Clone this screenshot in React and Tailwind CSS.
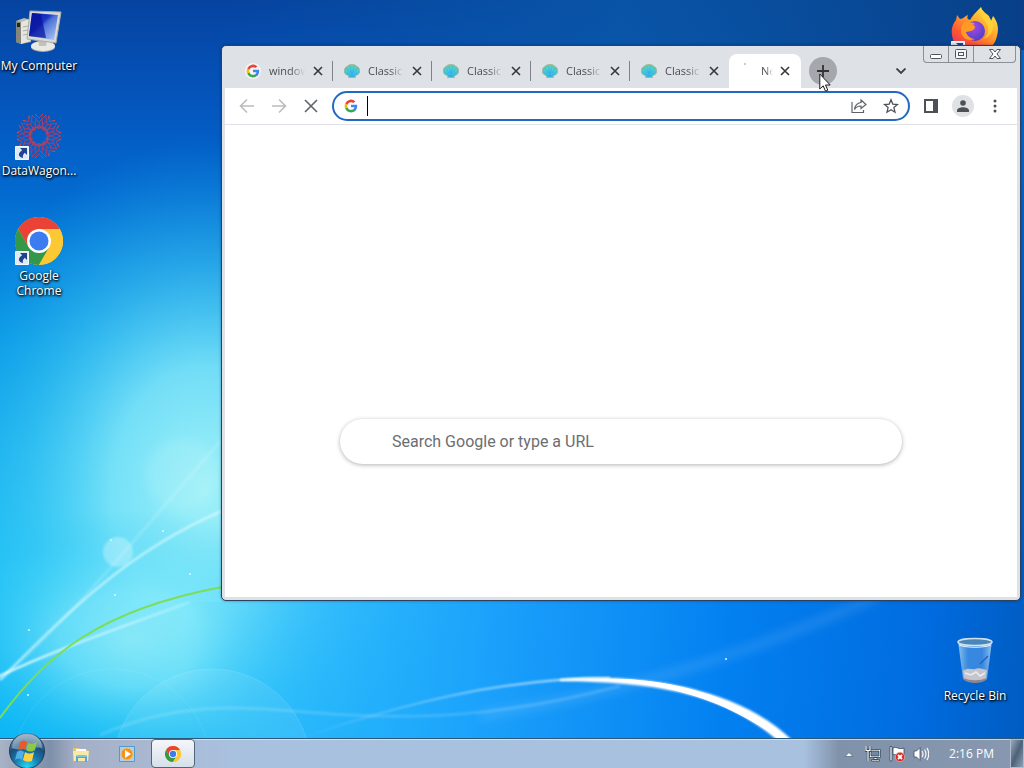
import React from "react";

const tabs = [
  { title: "windows", icon: "google" },
  { title: "Classic", icon: "shell" },
  { title: "Classic", icon: "shell" },
  { title: "Classic", icon: "shell" },
  { title: "Classic", icon: "shell" },
];

function GoogleIcon({ className }) {
  return (
    <svg viewBox="0 0 24 24" className={className} aria-hidden="true">
      <path fill="#4285f4" d="M22.6 12.2c0-.8-.1-1.5-.2-2.2H12v4.3h6a5.1 5.1 0 0 1-2.2 3.3v2.8h3.6c2-1.900 3.2-4.700 3.2-8.200z" />
      <path fill="#34a853" d="M12 23c3 0 5.5-1 7.3-2.700l-3.600-2.800c-1 .7-2.200 1.100-3.700 1.100-2.900 0-5.300-1.900-6.200-4.500H2.200v2.800A11 11 0 0 0 12 23z" />
      <path fill="#fbbc05" d="M5.8 14.1a6.600 6.600 0 0 1 0-4.200V7.100H2.200a11 11 0 0 0 0 9.900z" />
      <path fill="#ea4335" d="M12 5.400c1.600 0 3.100.6 4.200 1.600l3.200-3.100A11 11 0 0 0 2.200 7.100l3.600 2.800C6.700 7.300 9.100 5.400 12 5.400z" />
    </svg>
  );
}

function ShellIcon({ className }) {
  return (
    <svg viewBox="0 0 16 16" className={className} aria-hidden="true">
      <defs>
        <radialGradient id="shell" cx="50%" cy="70%" r="65%">
          <stop offset="0" stopColor="#1f9cec" />
          <stop offset="0.5" stopColor="#38c3dd" />
          <stop offset="1" stopColor="#66c9a0" />
        </radialGradient>
      </defs>
      <path
        fill="url(#shell)"
        stroke="#a5ae93"
        strokeWidth="0.8"
        d="M4.500 14.500 5 13 2 11.500C.6 10.500 0 9 .4 7.500.4 5.500 1.500 4.300 3 3.600 4 2.200 5.500 1.500 7 1.700c.7-.4 1.400-.4 2 0 1.600-.2 3 .5 4 1.900 1.500.7 2.600 1.900 2.600 3.900.4 1.500-.2 3-1.600 4L11 13l.5 1.500z"
      />
      <path
        stroke="#7fe8ea"
        strokeWidth="0.5"
        fill="none"
        opacity="0.7"
        d="M8 12V2.500M7 12 4.500 3.500M9 12l2.500-8.500M6.500 12 2 6.500M9.500 12 14 6.500"
      />
    </svg>
  );
}

function ChromeIcon({ className }) {
  return (
    <svg viewBox="0 0 48 48" className={className} aria-hidden="true">
      <circle cx="24" cy="24" r="24" fill="#fcc934" />
      <path fill="#ea4335" d="M3.200 12A24 24 0 0 1 44.800 12H24L13.600 30z" />
      <path fill="#34984b" d="M3.200 12A24 24 0 0 0 24 48L34.400 30 24 36 13.600 30z" />
      <path fill="#fcc934" d="M24 48A24 24 0 0 0 44.800 12H24l10.400 18z" />
      <circle cx="24" cy="24" r="12" fill="#fff" />
      <circle cx="24" cy="24" r="9.500" fill="#3b7df0" />
    </svg>
  );
}

function ShortcutArrow({ className }) {
  return (
    <svg viewBox="0 0 14 14" className={className} aria-hidden="true">
      <path fill="#dfeaf6" stroke="#f4f8fc" d="M.5.5h13v13H.5z" />
      <path fill="#1e4390" d="M5 2h7v7L9.800 6.800C8 8.500 7.500 9.800 8 12 3.500 11 2 7.500 7.200 4.200z" />
    </svg>
  );
}

function ComputerIcon() {
  return (
    <svg viewBox="0 0 48 48" className="size-12" aria-hidden="true">
      <defs>
        <linearGradient id="screen" x1="0" y1="0" x2="1" y2="1">
          <stop offset="0" stopColor="#0a16a8" />
          <stop offset="0.4" stopColor="#1c35c4" />
          <stop offset="0.5" stopColor="#4d73d9" />
          <stop offset="1" stopColor="#b9cdf5" />
        </linearGradient>
      </defs>
      <path fill="#b9bbb5" d="M1 14 9 11l7 2v22L6 37l-5-2z" />
      <path fill="#e6e6df" d="m6 15 9-3v22l-9 3z" />
      <path fill="#85877f" d="m1 14 5 1v22l-5-2z" />
      <path fill="#202821" d="M2 16h3v4H2z" />
      <path stroke="#aaaea2" d="m8 20 5-1M8 24l5-1M8 28l5-1" />
      <ellipse cx="28" cy="40" rx="12" ry="5" fill="#aeb0ab" />
      <ellipse cx="28" cy="39" rx="12" ry="5" fill="#e9e9e4" />
      <path fill="#bfc1bb" d="m23 31 9 2-1 6h-7z" />
      <path fill="#d9dad5" stroke="#a9aca8" d="m15 4 31 1-5 31-29-4z" />
      <path fill="url(#screen)" d="m17 6 26 2-4 25-25-4z" />
      <path fill="#07139d" d="m17 6 9 1 5 24-17-2z" opacity="0.7" />
    </svg>
  );
}

function DataWagonIcon() {
  const angles = [0, 36, 72, 108, 144, 180, 216, 252, 288, 324];
  return (
    <svg viewBox="0 0 48 48" className="size-12" fill="none" stroke="#a23f6c" aria-hidden="true">
      {angles.map((a) => (
        <g key={a} transform={`rotate(${a} 24 24)`}>
          <path d="m17 3 7 7 7-7M20 2l4 4 4-4M24 10v4M16 8l8 9 8-9M20 17l4-4 4 4" />
          <path stroke="#cc4650" d="m20 2 2 2M28 2l-2 2M22 15h4" />
        </g>
      ))}
    </svg>
  );
}

function FirefoxIcon() {
  return (
    <svg viewBox="0 0 48 48" className="size-12" aria-hidden="true">
      <defs>
        <linearGradient id="fox" x1="0.9" y1="0" x2="0.2" y2="1">
          <stop offset="0" stopColor="#fff44f" />
          <stop offset="0.4" stopColor="#ffa52b" />
          <stop offset="0.7" stopColor="#ff5b30" />
          <stop offset="1" stopColor="#e52468" />
        </linearGradient>
        <radialGradient id="globe" cx="40%" cy="30%" r="70%">
          <stop offset="0" stopColor="#a44be8" />
          <stop offset="1" stopColor="#5540c8" />
        </radialGradient>
      </defs>
      <path fill="url(#fox)" d="M30 0c1 4 5 6 8 9l2 5 2-5c5 6 6 13 4 20-2 10-11 18-22 18S2 39 1 28c-1-7 1-11 4-15l1-5 3 4c3 0 5-3 8-4-1 3-1 4 2 5 3-5 6-8 11-13z" />
      <circle cx="24" cy="24" r="10" fill="url(#globe)" />
      <path fill="#ff9b24" d="M13 16c4-2 8-1 11 1l-3 1c5 0 3 5-1 6l-5 1c1 4 5 7 9 7-7 3-14-1-14-9 0-3 1-5 3-7z" />
      <path fill="#ffd43a" d="M30 0c-2 6 1 10 4 14 5 6 4 15-2 18 9-2 13-13 8-19-3-5-9-7-10-13z" opacity="0.8" />
    </svg>
  );
}

function RecycleIcon() {
  return (
    <svg viewBox="0 0 48 48" className="size-12" aria-hidden="true">
      <defs>
        <linearGradient id="bin">
          <stop offset="0" stopColor="#b4d8f5" stopOpacity="0.8" />
          <stop offset="0.3" stopColor="#5ba0e8" stopOpacity="0.6" />
          <stop offset="0.7" stopColor="#6aaaf0" stopOpacity="0.5" />
          <stop offset="1" stopColor="#b8dcf8" stopOpacity="0.8" />
        </linearGradient>
      </defs>
      <path fill="url(#bin)" d="m7 4 5 38c4 4 20 4 24 0l5-38z" />
      <path fill="#c3c4cc" d="M12 34c5-4 9-1 12-2 4-2 8 0 12 1l-1 9c-5 4-17 4-22 0z" />
      <path fill="#8e8790" d="M13 41c5 3 17 3 22 0v2c-5 4-17 4-22 0z" />
      <path stroke="#ececf0" strokeWidth="1.500" fill="none" d="m14 36 6 2 5-3 4 4 5-3" />
      <path stroke="#2561b5" strokeWidth="1.500" fill="none" d="m29 27 8-8" />
      <ellipse cx="24" cy="5" rx="17" ry="3.500" fill="#4b86b9" stroke="#d0e2ef" strokeWidth="1.500" />
      <path stroke="#e9f5ff" fill="none" d="M8 8c7 3 25 3 32 0" />
    </svg>
  );
}

function Wallpaper() {
  return (
    <svg
      viewBox="0 0 1024 768"
      preserveAspectRatio="none"
      className="absolute inset-0 size-full"
      fill="none"
      aria-hidden="true"
    >
      <defs>
        <linearGradient id="sky" x1="0" y1="0" x2="0" y2="1">
          <stop offset="0" stopColor="#0643a0" />
          <stop offset="0.13" stopColor="#0455bc" />
          <stop offset="0.25" stopColor="#036ad0" />
          <stop offset="0.35" stopColor="#0784dd" />
          <stop offset="0.45" stopColor="#0a9ae6" />
          <stop offset="0.6" stopColor="#18b0ee" />
          <stop offset="0.75" stopColor="#20c2f5" />
          <stop offset="1" stopColor="#08b4f6" />
        </linearGradient>
        <linearGradient id="top" x1="0" y1="0" x2="1" y2="0">
          <stop offset="0" stopColor="#0a58a8" stopOpacity="0" />
          <stop offset="0.5" stopColor="#0a58a8" stopOpacity="0.8" />
          <stop offset="1" stopColor="#083f88" />
        </linearGradient>
        <linearGradient id="right" gradientUnits="userSpaceOnUse" x1="200" y1="500" x2="1100" y2="590">
          <stop offset="0" stopColor="#35c0fd" stopOpacity="0" />
          <stop offset="0.15" stopColor="#2db4fd" stopOpacity="0.7" />
          <stop offset="0.35" stopColor="#1a9ffb" />
          <stop offset="0.6" stopColor="#0380f0" />
          <stop offset="0.82" stopColor="#006bde" />
          <stop offset="1" stopColor="#0053b0" />
        </linearGradient>
        <radialGradient id="glow">
          <stop offset="0" stopColor="#a0f1f8" />
          <stop offset="0.35" stopColor="#8becfa" stopOpacity="0.8" />
          <stop offset="0.65" stopColor="#55d8f8" stopOpacity="0.4" />
          <stop offset="1" stopColor="#1eb8f2" stopOpacity="0" />
        </radialGradient>
        <linearGradient id="arc" gradientUnits="userSpaceOnUse" x1="300" y1="0" x2="680" y2="0">
          <stop offset="0" stopColor="#fff" stopOpacity="0" />
          <stop offset="1" stopColor="#fff" />
        </linearGradient>
        <linearGradient id="tail" gradientUnits="userSpaceOnUse" x1="0" y1="0" x2="222" y2="0">
          <stop offset="0" stopColor="#f0fdff" />
          <stop offset="0.6" stopColor="#e0fbff" stopOpacity="0.7" />
          <stop offset="1" stopColor="#e0fbff" stopOpacity="0.1" />
        </linearGradient>
        <filter id="soft">
          <feGaussianBlur stdDeviation="0.8" />
        </filter>
        <filter id="haze">
          <feGaussianBlur stdDeviation="5" />
        </filter>
      </defs>
      <path fill="url(#sky)" d="M0 0h1024v768H0z" />
      <path fill="url(#top)" d="M222 0h802v60H222z" />
      <ellipse cx="205" cy="490" rx="270" ry="350" fill="url(#glow)" />
      <ellipse cx="130" cy="640" rx="200" ry="130" fill="url(#glow)" opacity="0.7" />
      <path fill="url(#right)" d="M222 50h802v718H222z" />
      <path fill="url(#right)" d="M150 602h72v166h-72z" />
      <circle cx="182" cy="475" r="36" fill="#c4f5fa" opacity="0.2" filter="url(#haze)" />
      <circle cx="118" cy="552" r="15" fill="#d6f8fd" opacity="0.4" filter="url(#soft)" />
      <circle cx="212" cy="768" r="99" fill="#fff" fillOpacity="0.08" stroke="#fff" strokeOpacity="0.12" />
      <circle cx="112" cy="768" r="99" stroke="#fff" strokeOpacity="0.08" />
      <path stroke="#fff" strokeWidth="3" opacity="0.15" filter="url(#soft)" d="M0 680C80 610 150 520 222 440" />
      <path stroke="#e8fcff" strokeWidth="2" opacity="0.7" filter="url(#soft)" d="M0 680C70 610 130 550 222 511" />
      <path stroke="url(#tail)" strokeWidth="2" filter="url(#soft)" d="M-5 678C55 650 100 635 190 602" />
      <path stroke="#7cdd56" strokeWidth="2" d="M0 718C45 655 100 610 222 587" />
      <path stroke="#fff" strokeWidth="3" opacity="0.15" filter="url(#soft)" d="M100 735C190 695 260 710 350 715S520 712 620 686" />
      <path stroke="#fff" strokeWidth="10" opacity="0.1" filter="url(#haze)" d="M480 715C650 690 780 640 880 595" />
      <path stroke="url(#arc)" strokeWidth="2" filter="url(#soft)" d="M300 738C400 705 500 678 610 678" />
      <path fill="#fff" d="M560 679C650 673 740 690 792 740H777C725 695 660 682 560 681z" filter="url(#soft)" />
      <path fill="#fff" d="M600 679C670 677 735 695 790 740H780C725 699 665 683 600 680z" />
      <g fill="#d8fbff">
        <circle cx="111" cy="540" r="1" />
        <circle cx="163" cy="531" r="1" />
        <circle cx="190" cy="574" r="1" />
        <circle cx="115" cy="595" r="1" />
        <circle cx="29" cy="630" r="1" />
        <circle cx="28" cy="695" r="1" />
        <circle cx="726" cy="659" r="1" />
      </g>
    </svg>
  );
}

function DesktopIcon({ label, shortcut, className, children }) {
  return (
    <button
      className={`absolute flex w-20 flex-col items-center gap-[3px] text-xs/[15px] text-white [text-shadow:1px_1px_2px_#000,0_1px_3px_#000] ${className}`}
    >
      <span className="relative size-12">
        {children}
        {shortcut && <ShortcutArrow className="absolute bottom-0 left-0 size-[14px]" />}
      </span>
      <span>{label}</span>
    </button>
  );
}

function CloseTab({ title }) {
  return (
    <button aria-label={`Close ${title}`} className="grid size-4 shrink-0 place-items-center">
      <svg viewBox="0 0 10 10" className="size-[10px]" stroke="#34373b" strokeWidth="1.600">
        <path d="m1 1 8 8M9 1 1 9" />
      </svg>
    </button>
  );
}

function Tab({ title, icon, last }) {
  return (
    <div className="flex h-[34px] w-[99px] items-center pl-[11px]">
      {icon === "google" ? (
        <span className="grid size-4 shrink-0 place-items-center rounded-full bg-[#f3f4f6]">
          <GoogleIcon className="size-[14px]" />
        </span>
      ) : (
        <ShellIcon className="size-4 shrink-0" />
      )}
      <span className="ml-2 w-9 overflow-hidden whitespace-nowrap text-[#4a4d52] [mask-image:linear-gradient(to_right,#000_60%,transparent)]">
        {title}
      </span>
      <span className="ml-[5px] flex">
        <CloseTab title={title} />
      </span>
      <span className={last ? "hidden" : "ml-auto h-5 w-px bg-[#7f8389]"} />
    </div>
  );
}

function TabStrip() {
  return (
    <div className="flex h-[42px] pl-[9px] text-[11px]">
      <div className="flex items-end">
        {tabs.map((tab, i) => (
          <Tab key={i} {...tab} last={i === tabs.length - 1} />
        ))}
        <div className="flex h-[34px] w-[72px] items-center rounded-t-lg bg-white pl-2">
          <span className="flex size-4 justify-center">
            <span className="size-[2px] rounded-full bg-[#b5b8be]" />
          </span>
          <span className="ml-2 mr-1 w-3 overflow-hidden whitespace-nowrap text-[#4a4d52] [mask-image:linear-gradient(to_right,#000_40%,transparent)]">
            New
          </span>
          <CloseTab title="New Tab" />
        </div>
      </div>
      <button aria-label="New tab" className="mt-[11px] ml-2 grid size-7 place-items-center rounded-full bg-[#a4a7ac]">
        <svg viewBox="0 0 12 12" className="size-3" stroke="#303236" strokeWidth="1.800">
          <path d="M6 0v12M0 6h12" />
        </svg>
      </button>
      <button aria-label="Search tabs" className="mt-[11px] mr-2 ml-auto grid size-7 place-items-center">
        <svg viewBox="0 0 10 6" className="h-[6px] w-[10px]" fill="none" stroke="#3c4043" strokeWidth="1.800">
          <path d="m.5.5 4.500 4.500L9.500.5" />
        </svg>
      </button>
      <div className="mr-px flex h-[17px] rounded-b border border-t-0 border-[#8b8f96]">
        <button aria-label="Minimize" className="grid w-[25px] place-items-center border-r border-[#8b8f96]">
          <svg viewBox="0 0 14 14" className="size-[14px]" fill="#fff" stroke="#50555d">
            <rect x="1.500" y="7.500" width="11" height="4" rx="1" />
          </svg>
        </button>
        <button aria-label="Restore" className="grid w-[25px] place-items-center border-r border-[#8b8f96]">
          <svg viewBox="0 0 14 14" className="size-[14px]" fill="#f5f6f8" stroke="#50555d">
            <rect x="1.500" y="2.500" width="11" height="9" rx="1" />
            <rect x="4.500" y="5.500" width="5" height="3" />
          </svg>
        </button>
        <button aria-label="Close" className="grid w-[41px] place-items-center">
          <svg viewBox="0 0 14 14" className="size-[14px]" fill="#fff" stroke="#50555d">
            <path d="M1.500 2.500H5L7 5l2-2.500h3.500L9 7l3.500 4.500H9L7 9l-2 2.500H1.500L5 7z" />
          </svg>
        </button>
      </div>
    </div>
  );
}

function ToolButton({ label, children }) {
  return (
    <button aria-label={label} className="grid h-8 w-8 shrink-0 place-items-center">
      {children}
    </button>
  );
}

function Toolbar() {
  return (
    <div className="flex h-[37px] items-center border-b border-[#e3e1e8] bg-white pr-[6px] pl-[6px]">
      <ToolButton label="Back">
        <svg viewBox="0 0 16 16" className="size-4" fill="none" stroke="#babcbe" strokeWidth="1.600">
          <path d="M15 8H2M8 1.500 1.500 8 8 14.500" />
        </svg>
      </ToolButton>
      <ToolButton label="Forward">
        <svg viewBox="0 0 16 16" className="size-4" fill="none" stroke="#babcbe" strokeWidth="1.600">
          <path d="M1 8h13M8 1.500 14.500 8 8 14.500" />
        </svg>
      </ToolButton>
      <ToolButton label="Stop">
        <svg viewBox="0 0 16 16" className="size-4" stroke="#5f6368" strokeWidth="1.600">
          <path d="m2 2 12 12M14 2 2 14" />
        </svg>
      </ToolButton>
      <div className="mr-[5px] ml-[5px] flex h-[30px] min-w-0 flex-1 items-center rounded-full border-2 border-[#2369c3] bg-white pr-px pl-[10px]">
        <GoogleIcon className="size-[14px] shrink-0" />
        <span className="ml-[9px] h-5 w-px bg-black" />
        <input aria-label="Address bar" className="h-6 min-w-0 flex-1 text-sm outline-none" />
        <ToolButton label="Share">
          <svg viewBox="0 0 16 16" className="size-4" fill="none" stroke="#5f6368" strokeWidth="1.200">
            <path d="M1 4v10.500h11.500V12M10 2l5 4.500-5 4V8C7 8 5 9 3.500 11.500 4 7.500 6 5 10 4.500z" />
          </svg>
        </ToolButton>
        <ToolButton label="Bookmark this tab">
          <svg viewBox="0 0 16 16" className="size-4" fill="none" stroke="#4d5156" strokeWidth="1.300">
            <path d="m8 1.800 1.800 4.300 4.700.4-3.600 3.100 1.100 4.600L8 11.800l-4 2.400 1.100-4.600-3.600-3.100 4.700-.4z" />
          </svg>
        </ToolButton>
      </div>
      <ToolButton label="Side panel">
        <svg viewBox="0 0 14 14" className="size-[14px]">
          <path fill="#4d5156" d="M0 0h14v14H0zM2 2v10h7V2z" fillRule="evenodd" />
        </svg>
      </ToolButton>
      <ToolButton label="Profile">
        <span className="grid size-[22px] place-items-center rounded-full bg-[#dfe1e5]">
          <svg viewBox="0 0 12 12" className="size-3" fill="#4d5156">
            <circle cx="6" cy="3" r="2.800" />
            <path d="M0 12v-1.500C0 8.500 3.500 7.300 6 7.300s6 1.200 6 3.200V12z" />
          </svg>
        </span>
      </ToolButton>
      <ToolButton label="Menu">
        <svg viewBox="0 0 4 14" className="h-[14px] w-1" fill="#4d5156">
          <circle cx="2" cy="2" r="1.500" />
          <circle cx="2" cy="7" r="1.500" />
          <circle cx="2" cy="12" r="1.500" />
        </svg>
      </ToolButton>
    </div>
  );
}

function BrowserWindow() {
  return (
    <main className="absolute top-[45px] right-[3px] bottom-[137px] left-[221px] flex flex-col rounded-[5px] border border-[#29425f] bg-[#dee1e6] px-[3px] pb-[3px] text-xs shadow-[0_0_3px_rgba(0,20,60,0.4)]">
      <TabStrip />
      <Toolbar />
      <div className="flex flex-1 items-start justify-center bg-white px-6 pt-[294px]">
        <input
          aria-label="Search"
          placeholder="Search Google or type a URL"
          className="h-[45px] w-full max-w-[562px] rounded-full bg-white px-[52px] font-[Roboto,sans-serif] text-base text-[#5f6368] shadow-[0_1px_4px_rgba(32,33,36,0.35)] outline-none placeholder:text-[#6b6e72]"
        />
      </div>
    </main>
  );
}

function StartOrb() {
  return (
    <svg viewBox="0 0 38 38" className="relative -top-1 size-[38px] shrink-0" aria-hidden="true">
      <defs>
        <radialGradient id="orb" cx="50%" cy="95%" r="90%">
          <stop offset="0" stopColor="#28d5f3" />
          <stop offset="0.4" stopColor="#157caf" />
          <stop offset="0.7" stopColor="#1b4e7c" />
          <stop offset="1" stopColor="#7999b2" />
        </radialGradient>
      </defs>
      <circle cx="19" cy="20" r="17.500" fill="url(#orb)" stroke="#213c5a" />
      <path fill="#c6dae7" opacity="0.45" d="M4 17a15 15 0 0 1 30 0c-9-2-21 4-30 0z" />
      <path fill="#e9592a" d="M12 11c3-2 5-2 7 0l-2 8c-2-2-4-2-7 0z" />
      <path fill="#8fc943" d="M20 12c3 1 6 1 9-1l-2 8c-3 2-6 2-9 0z" />
      <path fill="#51aee9" d="M9 21c3-2 5-2 7 0l-2 8c-2-2-4-2-7 0z" />
      <path fill="#fcd240" d="M17 21c3 2 6 2 9 0l-2 9c-3 1-6 1-9-1z" />
    </svg>
  );
}

function Taskbar() {
  return (
    <footer className="relative flex h-[30px] items-stretch border-t border-[#2b5878] bg-[linear-gradient(to_right,#a9b3c6_0,#7e8fa9_50px,#a4afc6_75px,#a9b8d0_150px,#a8c1df_230px,#a8c1df_calc(100%-220px),#8092aa_calc(100%-185px),#8798b0_100%)] shadow-[inset_0_1px_0_rgba(225,240,250,0.7)]">
      <button aria-label="Start" className="flex w-[58px] items-center pl-2">
        <StartOrb />
      </button>
      <button aria-label="Windows Explorer" className="grid w-[46px] place-items-center">
        <svg viewBox="0 0 18 18" className="size-[18px]">
          <path fill="#e4c668" d="M1 3h6l1 2h8v11H1z" />
          <path fill="#fff" d="M4 4h10v3H4z" />
          <path fill="#f7eaa5" d="M1 6h16l-1 10H2z" />
          <path fill="#57a6d7" d="M4 17v-5q0-2 2-2h7q2 0 2 2v5h-2v-4H6v4z" />
          <path stroke="#a7dcf4" d="M5 11h9" />
        </svg>
      </button>
      <button aria-label="Windows Media Player" className="grid w-[46px] place-items-center">
        <svg viewBox="0 0 16 16" className="size-4">
          <path fill="#acd2ee" stroke="#4c9cd2" d="M.5.5h15v15H.5z" />
          <circle cx="8" cy="8" r="6" fill="#f2921d" stroke="#fac064" />
          <path fill="#fff" d="m6 4 6 4-6 4z" />
        </svg>
      </button>
      <button
        aria-label="Google Chrome"
        className="ml-px grid w-11 place-items-center rounded-sm border border-[#50647e] bg-gradient-to-b from-[#f4f6f9] to-[#d7dfea]"
      >
        <ChromeIcon className="size-4" />
      </button>
      <div className="ml-auto flex items-center">
        <button aria-label="Show hidden icons" className="grid h-full w-6 place-items-center">
          <svg viewBox="0 0 10 6" className="h-[6px] w-[10px]" fill="#fff" stroke="#5d6f86" strokeWidth="0.8">
            <path d="m1 5.500 4-4 4 4z" />
          </svg>
        </button>
        <button aria-label="Network" className="grid w-6 place-items-center">
          <svg viewBox="0 0 16 16" className="size-4" fill="none" stroke="#26384b" strokeWidth="0.7">
            <path fill="#fff" d="M4.500 3.500h11v8h-11zM9 11.500h3v2H9zM6.500 13.500h8v1.500h-8z" />
            <path fill="#6f8aa4" d="M6 5h8v5H6z" />
            <path stroke="#26384b" strokeWidth="2.400" d="M1 0v4.500h4V0M3 4v11" />
            <path stroke="#fff" strokeWidth="1.200" d="M1 0v4.500h4V0M3 4v11" />
          </svg>
        </button>
        <button aria-label="Action Center" className="grid w-6 place-items-center">
          <svg viewBox="0 0 16 16" className="size-4">
            <path fill="#fff" stroke="#34465a" strokeWidth="0.8" d="M1 .5h2V15H1zM4 2c4-2 5 2 11 0v7c-5 2-7-2-11 0z" />
            <circle cx="11" cy="11" r="4.700" fill="#d62b26" stroke="#f3b1aa" strokeWidth="0.7" />
            <path stroke="#fff" strokeWidth="1.800" d="m9 9 4 4M13 9l-4 4" />
          </svg>
        </button>
        <button aria-label="Volume" className="grid w-6 place-items-center">
          <svg viewBox="0 0 16 16" className="size-4" fill="none">
            <path fill="#fff" stroke="#3d4f64" strokeWidth="0.8" d="M1 5h2.500L7 1.500v13L3.500 11H1z" />
            <path stroke="#fff" strokeWidth="1.100" d="M9 5q2 3 0 6M11.500 3.500q3 4.500 0 9M14 2q3.500 6 0 12" />
          </svg>
        </button>
        <time className="w-[77px] text-center text-xs text-white">2:16 PM</time>
        <button
          aria-label="Show desktop"
          className="h-full w-[14px] border border-[#b0bccb] bg-gradient-to-br from-[#9baabd] via-[#4d6178] to-[#90a1b5]"
        />
      </div>
    </footer>
  );
}

function Cursor() {
  return (
    <svg viewBox="0 0 12 19" className="pointer-events-none absolute top-[73px] left-[819px] h-[19px] w-3" aria-hidden="true">
      <path fill="#fff" stroke="#1c1c1c" d="M.8 1v15l3.400-3.200 2.300 5.400 2.300-1-2.300-5.200h4.700z" />
    </svg>
  );
}

export default function App() {
  return (
    <div className="relative flex h-screen flex-col overflow-hidden bg-[#0781dd] font-['Open_Sans','Noto_Sans',sans-serif]">
      <Wallpaper />
      <div className="relative flex-1">
        <DesktopIcon label="My Computer" className="top-[7px] left-[-1px]">
          <ComputerIcon />
        </DesktopIcon>
        <DesktopIcon label="DataWagon..." shortcut className="top-28 left-[-1px]">
          <DataWagonIcon />
        </DesktopIcon>
        <DesktopIcon label="Google Chrome" shortcut className="top-[217px] left-[-1px]">
          <ChromeIcon className="size-12" />
        </DesktopIcon>
        <DesktopIcon label="Firefox" shortcut className="top-[7px] right-[9px]">
          <FirefoxIcon />
        </DesktopIcon>
        <DesktopIcon label="Recycle Bin" className="right-[9px] bottom-[35px]">
          <RecycleIcon />
        </DesktopIcon>
        <BrowserWindow />
        <Cursor />
      </div>
      <Taskbar />
    </div>
  );
}
